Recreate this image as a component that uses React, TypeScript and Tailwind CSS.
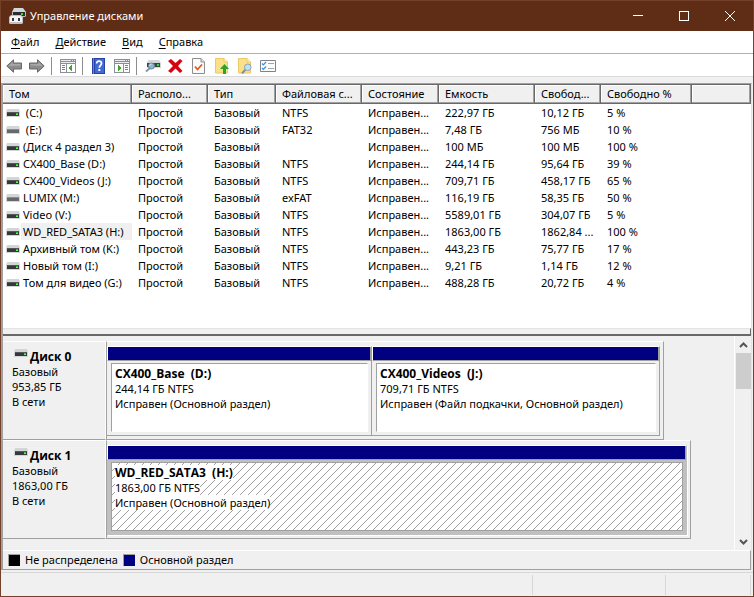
import React from 'react';
import clsx from 'clsx';

interface Volume {
  name: string;
  fs: string;
  size: string;
  free: string;
  percent: string;
  removable?: boolean;
  selected?: boolean;
}

interface Partition {
  name: string;
  info: string;
  status: string;
  grow: string;
  selected?: boolean;
}

interface Disk {
  name: string;
  size: string;
  width: string;
  partitions: Partition[];
}

const columns = [
  { title: 'Том', width: 'w-[129px]' },
  { title: 'Располо...', width: 'w-[76px]' },
  { title: 'Тип', width: 'w-[68px]' },
  { title: 'Файловая с...', width: 'w-[86px]' },
  { title: 'Состояние', width: 'w-[77px]' },
  { title: 'Емкость', width: 'w-[96px]' },
  { title: 'Свобод...', width: 'w-[66px]' },
  { title: 'Свободно %', width: 'w-[91px]' },
  { title: '', width: '' },
];

const volumes: Volume[] = [
  { name: '\u00a0(C:)', fs: 'NTFS', size: '222,97 ГБ', free: '10,12 ГБ', percent: '5 %' },
  { name: '\u00a0(E:)', fs: 'FAT32', size: '7,48 ГБ', free: '756 МБ', percent: '10 %', removable: true },
  { name: '(Диск 4 раздел 3)', fs: '', size: '100 МБ', free: '100 МБ', percent: '100 %' },
  { name: 'CX400_Base (D:)', fs: 'NTFS', size: '244,14 ГБ', free: '95,64 ГБ', percent: '39 %' },
  { name: 'CX400_Videos (J:)', fs: 'NTFS', size: '709,71 ГБ', free: '458,17 ГБ', percent: '65 %' },
  { name: 'LUMIX (M:)', fs: 'exFAT', size: '116,19 ГБ', free: '58,35 ГБ', percent: '50 %', removable: true },
  { name: 'Video (V:)', fs: 'NTFS', size: '5589,01 ГБ', free: '304,07 ГБ', percent: '5 %' },
  { name: 'WD_RED_SATA3 (H:)', fs: 'NTFS', size: '1863,00 ГБ', free: '1862,84 ...', percent: '100 %', selected: true },
  { name: 'Архивный том (K:)', fs: 'NTFS', size: '443,23 ГБ', free: '75,77 ГБ', percent: '17 %' },
  { name: 'Новый том (I:)', fs: 'NTFS', size: '9,21 ГБ', free: '1,14 ГБ', percent: '12 %' },
  { name: 'Том для видео (G:)', fs: 'NTFS', size: '488,28 ГБ', free: '20,72 ГБ', percent: '4 %' },
];

const disks: Disk[] = [
  {
    name: 'Диск 0',
    size: '953,85 ГБ',
    width: 'w-[558px]',
    partitions: [
      { name: 'CX400_Base  (D:)', info: '244,14 ГБ NTFS', status: 'Исправен (Основной раздел)', grow: 'grow-[264]' },
      { name: 'CX400_Videos  (J:)', info: '709,71 ГБ NTFS', status: 'Исправен (Файл подкачки, Основной раздел)', grow: 'grow-[287]' },
    ],
  },
  {
    name: 'Диск 1',
    size: '1863,00 ГБ',
    width: 'w-[585px]',
    partitions: [
      { name: 'WD_RED_SATA3  (H:)', info: '1863,00 ГБ NTFS', status: 'Исправен (Основной раздел)', grow: 'grow', selected: true },
    ],
  },
];

function DriveIcon({ removable }: { removable?: boolean }) {
  return (
    <svg width="14" height="8" viewBox="0 0 14 8" className="shrink-0" aria-hidden="true">
      <path d="M1 0h12l1 3v5H0V3z" fill="#d3d6d9" />
      <path d="M1 3h12v4H1z" fill={removable ? '#66686b' : '#36383a'} />
      <path d="M1 3h12v1H1z" fill={removable ? '#8b8d90' : '#55585a'} />
      {!removable && <path d="M10 4h2v2h-2z" fill="#1fc41f" />}
      {!removable && <path d="M10 5h2v1h-2z" fill="#5dff5d" />}
    </svg>
  );
}

function AppIcon() {
  return (
    <svg width="17" height="16" viewBox="0 0 17 16" aria-hidden="true">
      <path d="M5 0h9l3 4H3z" fill="#d4d7d9" />
      <path d="M3 4h14v4l-1 1H3z" fill="#b9bcbe" />
      <path d="M4 4h12v4H4z" fill="#2b2d2e" />
      <path d="M12 5h2v2h-2z" fill="#38e038" />
      <path d="M2 7h10l2 2v6l-1 1H1l-1-1V9z" fill="#bfc2c4" />
      <path d="M2 8h9l2 1v5H1V9z" fill="#f4f4f4" />
      <path d="M3 10h2v3H3zM9 10h2v3H9z" fill="#3b3b3b" />
    </svg>
  );
}

function ArrowIcon({ right }: { right?: boolean }) {
  return (
    <svg width="16" height="14" viewBox="0 0 16 14" className={right ? '-scale-x-100' : ''} aria-hidden="true">
      <path d="M.8 7L7.500 .8V4h8v6h-8v3.200z" fill="#8c8c8c" stroke="#686868" />
      <path d="M2.500 7L6.500 3v2h8v1.500z" fill="#a9a9a9" />
    </svg>
  );
}

function PaneIcon({ right }: { right?: boolean }) {
  return (
    <svg width="16" height="14" viewBox="0 0 16 14" shapeRendering="crispEdges" aria-hidden="true">
      <path d="M0 0h16v14H0z" fill="#8b8f98" />
      <path d="M1 1h10v1H1zM12 1h1v1h-1zM14 1h1v1h-1zM1 3h14v1H1z" fill="#e9ebef" />
      <path d="M1 5h14v8H1z" fill="#fff" />
      <path d={right ? 'M9 5h1v8H9z' : 'M6 5h1v8H6z'} fill="#8b8f98" />
      <path d={right ? 'M11 6h3v1h-3zM11 8h3v1h-3zM11 10h3v1h-3z' : 'M2 6h3v1H2zM2 8h3v1H2zM2 10h3v1H2z'} fill="#6f7f9c" />
      <path d={right ? 'M4 6h1v1h1v1h1v2H6v1H5v1H4z' : 'M12 6h-1v1h-1v1H9v2h1v1h1v1h1z'} fill="#3fa62b" />
    </svg>
  );
}

function HelpIcon() {
  return (
    <svg width="13" height="16" viewBox="0 0 13 16" aria-hidden="true">
      <path d="M0 0h13v16H0z" fill="#2743a6" />
      <path d="M3 1h9v14H3z" fill="#4169d2" />
      <path d="M1 0h1v16H1z" fill="#6483d8" />
      <path d="M4.700 5.500C4.700 3.800 5.700 3.200 7 3.200s2.500.8 2.500 2.200C9.500 7.300 7.300 7.300 7.300 9.700" fill="none" stroke="#fff" strokeWidth="1.700" />
      <path d="M6.300 11h2v2h-2z" fill="#fff" />
    </svg>
  );
}

function RescanIcon() {
  return (
    <svg width="16" height="12" viewBox="0 0 16 12" aria-hidden="true">
      <path d="M3 0h11l2 3v5H2V3z" fill="#d3d6d8" />
      <path d="M2 3h13v4H2z" fill="#3f4244" />
      <path d="M12 4h2v2h-2z" fill="#2ee02e" />
      <path d="M5 8L1 11.500" stroke="#8496a5" strokeWidth="2" />
      <circle cx="6.500" cy="6" r="3" fill="#8fb4cc" stroke="#64839b" />
      <path d="M4.500 6a2 2 0 0 1 2-2" fill="none" stroke="#d7ecf8" />
    </svg>
  );
}

function DeleteIcon() {
  return (
    <svg width="15" height="14" viewBox="0 0 15 14" aria-hidden="true">
      <path d="M0 2L3 0l4.500 4L12 0l2.500 2-4.500 5 4.500 5-2.500 2-4.500-4.500L3 14l-3-2 5-5z" fill="#d6040f" />
    </svg>
  );
}

function CheckPageIcon() {
  return (
    <svg width="13" height="16" viewBox="0 0 13 16" aria-hidden="true">
      <path d="M.5.5h8.500l3.500 3.500v11.500H.5z" fill="#fafafa" stroke="#8d8d8d" />
      <path d="M9 .5V4h3.500" fill="#e4e4e4" stroke="#8d8d8d" />
      <path d="M3 8.500l2.500 3L10 6.500" fill="none" stroke="#e8541c" strokeWidth="1.800" />
    </svg>
  );
}

function FolderUpIcon() {
  return (
    <svg width="14" height="16" viewBox="0 0 14 16" aria-hidden="true">
      <path d="M.5.5H9l3.500 3.500v11H.5z" fill="#fbe08a" stroke="#ecc868" />
      <path d="M9 .5V4h3.500" fill="#fff1bd" stroke="#ecc868" />
      <path d="M9.500 6L14 11h-3v5H8v-5H5z" fill="#2da32d" />
    </svg>
  );
}

function FolderSearchIcon() {
  return (
    <svg width="14" height="16" viewBox="0 0 14 16" aria-hidden="true">
      <path d="M.5.5H9l3.500 3.500v11H.5z" fill="#fbe08a" stroke="#ecc868" />
      <path d="M9 .5V4h3.500" fill="#fff1bd" stroke="#ecc868" />
      <path d="M7.500 11.500L4 15.500" stroke="#8192a0" strokeWidth="2" />
      <circle cx="9.800" cy="9.300" r="3.300" fill="#bfe0f3" stroke="#8aa4b8" />
    </svg>
  );
}

function TaskListIcon() {
  return (
    <svg width="16" height="12" viewBox="0 0 16 12" aria-hidden="true">
      <path d="M.5.5h15v11H.5z" fill="#fbfbfb" stroke="#7e838b" />
      <path d="M2 3.500l1.300 1.300L6 2M2 8l1.300 1.300L6 6.500" fill="none" stroke="#3a8ed8" strokeWidth="1.200" />
      <path d="M8 3.500h6M8 8.500h6" stroke="#a0a5ac" />
    </svg>
  );
}

function ToolButton({ label, children }: { label: string; children: React.ReactNode }) {
  return (
    <button type="button" title={label} aria-label={label} className="flex h-5 w-[23px] items-center justify-center">
      {children}
    </button>
  );
}

function Separator() {
  return <span className="mr-1 ml-[3px] h-[18px] w-px bg-[#8d8d8d]" />;
}

function TitleBar() {
  return (
    <header className="flex h-[31px] items-center border-t border-[#75402a] bg-[#5f2c15] pl-2 text-white">
      <AppIcon />
      <h1 className="ml-1 grow">Управление дисками</h1>
      <button type="button" aria-label="Свернуть" className="flex h-7 w-[46px] items-center justify-center">
        <svg width="10" height="10" shapeRendering="crispEdges"><path d="M0 4.500h10" stroke="#fff" /></svg>
      </button>
      <button type="button" aria-label="Развернуть" className="flex h-7 w-[46px] items-center justify-center">
        <svg width="10" height="10" shapeRendering="crispEdges"><path d="M.5.5h9v9h-9z" fill="none" stroke="#fff" /></svg>
      </button>
      <button type="button" aria-label="Закрыть" className="flex h-7 w-[46px] items-center justify-center">
        <svg width="10" height="10"><path d="M0 0l10 10M10 0L0 10" stroke="#fff" /></svg>
      </button>
    </header>
  );
}

function MenuBar() {
  return (
    <nav className="flex h-[23px] items-center gap-4 border-b border-[#adb0b8] bg-white pl-[10px]">
      {['Файл', 'Действие', 'Вид', 'Справка'].map((item) => (
        <button key={item} type="button">
          <span className="underline underline-offset-2">{item[0]}</span>
          {item.slice(1)}
        </button>
      ))}
    </nav>
  );
}

function Toolbar() {
  return (
    <div className="flex h-[23px] items-center border-b border-[#dadada] bg-white pt-[2px] pl-px">
      <ToolButton label="Назад"><ArrowIcon /></ToolButton>
      <ToolButton label="Вперед"><ArrowIcon right /></ToolButton>
      <Separator />
      <ToolButton label="Дерево консоли"><PaneIcon /></ToolButton>
      <Separator />
      <ToolButton label="Справка"><HelpIcon /></ToolButton>
      <ToolButton label="Панель действий"><PaneIcon right /></ToolButton>
      <Separator />
      <ToolButton label="Обновить"><RescanIcon /></ToolButton>
      <ToolButton label="Удалить"><DeleteIcon /></ToolButton>
      <ToolButton label="Свойства"><CheckPageIcon /></ToolButton>
      <ToolButton label="Открыть"><FolderUpIcon /></ToolButton>
      <ToolButton label="Проводник"><FolderSearchIcon /></ToolButton>
      <ToolButton label="Список"><TaskListIcon /></ToolButton>
    </div>
  );
}

function VolumeTable() {
  return (
    <div className="grow border-t border-[#696969] bg-white">
      <table className="w-full table-fixed border-collapse text-left whitespace-nowrap">
        <thead>
          <tr className="h-[19px]">
            {columns.map((col) => (
              <th key={col.title} scope="col" className={clsx('overflow-hidden p-0 font-normal', col.width)}>
                <div className="h-[19px] border-r border-b border-[#696969] bg-[#f0f0f0] pl-[6px] leading-[18px] shadow-[inset_-1px_-1px_0_#a0a0a0,inset_1px_1px_0_#fff]">
                  {col.title}
                </div>
              </th>
            ))}
          </tr>
        </thead>
        <tbody>
          {volumes.map((v) => (
            <tr key={v.name} className="h-[17px] leading-[17px]">
              <td className="overflow-hidden p-0">
                <div className="flex items-center pl-[3px]">
                  <DriveIcon removable={v.removable} />
                  <span className={clsx('ml-px grow pl-[2px]', v.selected && 'bg-[#f0f0f0]')}>{v.name}</span>
                </div>
              </td>
              <td className="p-0 pl-[6px]">Простой</td>
              <td className="p-0 pl-[6px]">Базовый</td>
              <td className="p-0 pl-[6px]">{v.fs}</td>
              <td className="p-0 pl-[6px]">Исправен...</td>
              <td className="p-0 pl-[6px]">{v.size}</td>
              <td className="p-0 pl-[6px]">{v.free}</td>
              <td className="p-0 pl-[6px]">{v.percent}</td>
              <td />
            </tr>
          ))}
        </tbody>
      </table>
    </div>
  );
}

function Hatch() {
  return (
    <svg className="absolute inset-0 h-full w-full" aria-hidden="true">
      <defs>
        <pattern id="hatch" width="8" height="8" patternUnits="userSpaceOnUse">
          <path
            d="M7 0h1v1H7zM6 1h1v1H6zM5 2h1v1H5zM4 3h1v1H4zM3 4h1v1H3zM2 5h1v1H2zM1 6h1v1H1zM0 7h1v1H0z"
            fill="#a0a0a0"
            shapeRendering="crispEdges"
          />
        </pattern>
      </defs>
      <rect width="100%" height="100%" fill="url(#hatch)" />
    </svg>
  );
}

function PartitionBox({ part }: { part: Partition }) {
  return (
    <div
      className={clsx(
        'flex basis-0 flex-col border-t border-r border-b border-t-white',
        part.grow,
        part.selected ? 'border-r-[#c0c0c0] border-b-[#c0c0c0] bg-[#c0c0c0] shadow-[1px_1px_0_#fff]' : 'border-r-[#a0a0a0] border-b-[#a0a0a0]'
      )}
    >
      <div className="h-[14px] border-r border-b border-l border-[#a0a0a0] border-l-white bg-[#000080]" />
      <div
        className={clsx(
          'relative mt-[2px] mr-[3px] mb-[3px] ml-1 grow overflow-hidden border bg-white pt-[2px] pl-[3px] whitespace-nowrap',
          part.selected ? 'border-[#a0a0a0]' : 'border-t-[#a0a0a0] border-r-white border-b-white border-l-[#a0a0a0]'
        )}
      >
        {part.selected && <Hatch />}
        <div className="relative flex flex-col items-start leading-[15px]">
          <strong className="bg-white font-['Open_Sans','Noto_Sans',sans-serif] text-[12px] leading-[15px] whitespace-pre">{part.name}</strong>
          <span className="bg-white">{part.info}</span>
          <span className="bg-white">{part.status}</span>
        </div>
      </div>
    </div>
  );
}

function DiskRow({ disk }: { disk: Disk }) {
  return (
    <section className="flex h-[99px]">
      <div className="w-[103px] shrink-0 border-t border-r border-b border-white border-b-[#a0a0a0] pt-[7px] pl-[9px] leading-[15px]">
        <div className="flex items-start gap-[2px] pl-[2px]">
          <DriveIcon />
          <strong className="font-['Open_Sans','Noto_Sans',sans-serif] text-[12px] leading-[15px]">{disk.name}</strong>
        </div>
        <p>Базовый</p>
        <p>{disk.size}</p>
        <p>В сети</p>
      </div>
      <div className={clsx('flex border border-[#a0a0a0] border-t-white pt-1 pr-[3px] pb-[3px]', disk.width)}>
        {disk.partitions.map((part) => (
          <PartitionBox key={part.name} part={part} />
        ))}
      </div>
    </section>
  );
}

function ScrollBar() {
  return (
    <div className="flex w-[17px] flex-col items-center border-l border-white bg-[#f0f0f0]">
      <button type="button" aria-label="Вверх" className="flex h-[17px] w-full items-center justify-center">
        <svg width="9" height="6" viewBox="0 0 9 6"><path d="M1 5l3.500-3.500L8 5" fill="none" stroke="#555" strokeWidth="2" /></svg>
      </button>
      <div className="h-9 w-[15px] bg-[#cdcdcd]" />
      <div className="grow" />
      <button type="button" aria-label="Вниз" className="flex h-[17px] w-full items-center justify-center">
        <svg width="9" height="6" viewBox="0 0 9 6"><path d="M1 1l3.500 3.500L8 1" fill="none" stroke="#555" strokeWidth="2" /></svg>
      </button>
    </div>
  );
}

function Legend() {
  return (
    <div className="flex h-5 items-center border-t border-r border-b border-t-white border-r-[#a0a0a0] border-b-[#a0a0a0] pl-[5px]">
      <span className="size-3 border-t border-l border-[#a0a0a0] bg-black" />
      <span className="ml-[5px]">Не распределена</span>
      <span className="ml-[5px] size-3 border-t border-l border-[#a0a0a0] bg-[#000080]" />
      <span className="ml-[5px]">Основной раздел</span>
    </div>
  );
}

export default function App() {
  return (
    <div className="flex min-h-screen flex-col border-r border-b border-l border-[#75402a] bg-[#f0f0f0] font-['Noto_Sans','Open_Sans',sans-serif] text-[11px] leading-4 text-black">
      <TitleBar />
      <MenuBar />
      <Toolbar />
      <main className="mt-[6px] mr-px flex grow flex-col border-t border-r border-l-2 border-t-[#a0a0a0] border-r-[#e3e3e3] border-l-[#a0a0a0]">
        <VolumeTable />
        <div className="h-[8px] border-t border-r border-b-2 border-t-[#e3e3e3] border-r-[#696969] border-b-[#696969]" />
        <div className="flex h-[214px]">
          <div className="min-w-0 grow pt-[5px]">
            {disks.map((disk) => (
              <DiskRow key={disk.name} disk={disk} />
            ))}
          </div>
          <ScrollBar />
        </div>
        <Legend />
      </main>
      <footer className="mt-[2px] flex h-[24px] border-t border-[#d7d7d7] pt-[2px] pb-px">
        <div className="grow border-r border-[#d7d7d7]" />
        <div className="w-[133px] border-r border-[#d7d7d7]" />
        <div className="mr-[2px] w-[85px] border-r border-[#d7d7d7]" />
      </footer>
    </div>
  );
}
